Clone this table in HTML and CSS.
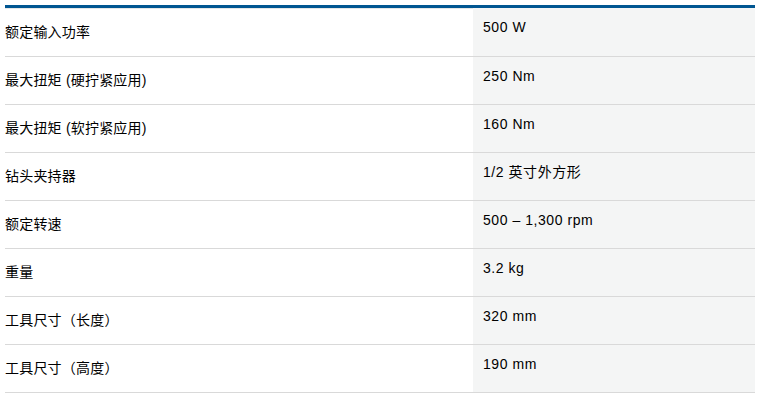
FILE: index.html
```html
<!DOCTYPE html>
<html lang="zh-CN">
<head>
<meta charset="utf-8">
<title>技术参数</title>
<link rel="stylesheet" href="styles.css">
</head>
<body>
<div class="specs">
  <div class="spec-row"><div class="label">额定输入功率</div><div class="value">500 W</div></div>
  <div class="spec-row"><div class="label">最大扭矩 (硬拧紧应用)</div><div class="value">250 Nm</div></div>
  <div class="spec-row"><div class="label">最大扭矩 (软拧紧应用)</div><div class="value">160 Nm</div></div>
  <div class="spec-row"><div class="label">钻头夹持器</div><div class="value">1/2 英寸外方形</div></div>
  <div class="spec-row"><div class="label">额定转速</div><div class="value">500 – 1,300 rpm</div></div>
  <div class="spec-row"><div class="label">重量</div><div class="value">3.2 kg</div></div>
  <div class="spec-row"><div class="label">工具尺寸（长度）</div><div class="value">320 mm</div></div>
  <div class="spec-row"><div class="label">工具尺寸（高度）</div><div class="value">190 mm</div></div>
</div>
</body>
</html>
```
FILE: styles.css
```css
html, body {
  margin: 0;
  padding: 0;
  background: #ffffff;
}

body {
  font-family: "Liberation Sans", "Noto Sans CJK SC", sans-serif;
  font-size: 14px;
  color: #000000;
}

.specs {
  width: 750px;
  margin: 5px 0 0 5px;
  border-top: 3px solid #005691;
  box-shadow: inset 0 1px 0 #e4e6e6;
}

.spec-row {
  display: grid;
  grid-template-columns: 468px 1fr;
  height: 47px;
  border-bottom: 1px solid #d9d9d9;
}

.spec-row:first-child {
  height: 48px;
}

.label {
  display: flex;
  align-items: center;
  line-height: 20px;
  padding-bottom: 1px;
  letter-spacing: 0.2px;
}

.value {
  background: #f4f5f5;
  padding: 9px 0 0 10px;
  line-height: 20px;
  letter-spacing: 0.55px;
}
```
